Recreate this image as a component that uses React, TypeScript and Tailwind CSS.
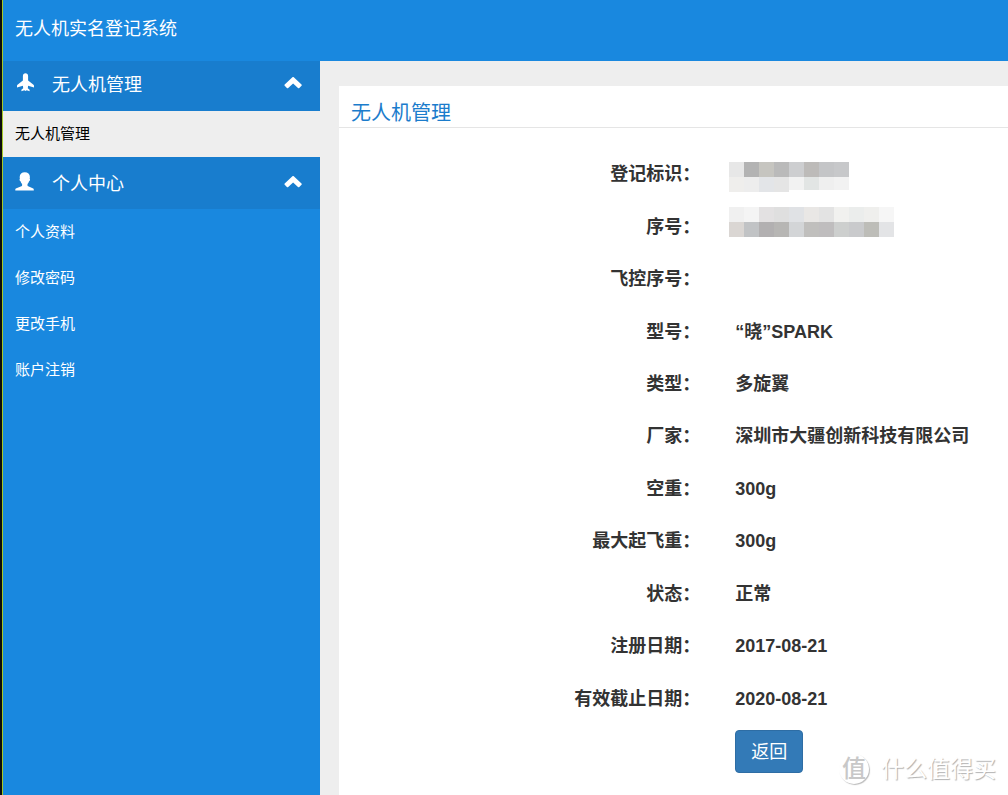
import React, { useState } from "react";

const droneLinks = ["无人机管理"];
const userLinks = ["个人资料", "修改密码", "更改手机", "账户注销"];

const fields = [
  { label: "登记标识", value: "", mask: "id" },
  { label: "序号", value: "", mask: "serial" },
  { label: "飞控序号", value: "" },
  { label: "型号", value: "“晓”SPARK" },
  { label: "类型", value: "多旋翼" },
  { label: "厂家", value: "深圳市大疆创新科技有限公司" },
  { label: "空重", value: "300g" },
  { label: "最大起飞重", value: "300g" },
  { label: "状态", value: "正常" },
  { label: "注册日期", value: "2017-08-21" },
  { label: "有效截止日期", value: "2020-08-21" },
];

const idMask = [
  ["#e7e7e7", "#b3b3b3", "#c6c5c0", "#bababa", "#cdced0", "#bdbbb9", "#c4c5c7", "#c7c8ca"],
  ["#efeeec", "#ededed", "#e3e5e8", "#e5e5e5", "#f2f2f2", "#e2e5e4", "#efefef", "#f2f2f2"],
];

const serialMask = [
  ["#f0f0f0", "#f4f4f4", "#e3e1e2", "#dfdfdf", "#e0e2e5", "#e9e7e5", "#e3e3e3", "#f1f1ef", "#ebedec", "#efefed", "#f6f6f6"],
  ["#dad6d3", "#c1c3c5", "#b2b0b1", "#b7b6b4", "#d3d5d7", "#c0bfbd", "#bfbdbe", "#cdcfce", "#c9cacc", "#bdbdb8", "#e3e4e6"],
];

const Mosaic = ({ rows, rounded }: { rows: string[][]; rounded?: boolean }) => (
  <svg
    className="block h-[30px]"
    width={rows[0].length * 15}
    height={30}
    shapeRendering="crispEdges"
    aria-hidden="true"
  >
    {rows.map((row, y) =>
      row.map((color, x) => (
        <rect
          key={`${x}-${y}`}
          x={x * 15}
          y={y * 15}
          width={15}
          height={rounded && y === 1 && x > 3 ? 13 : 15}
          fill={color}
        />
      ))
    )}
  </svg>
);

const PlaneIcon = () => (
  <svg className="size-[19px]" viewBox="0 0 19 19" fill="currentColor" aria-hidden="true">
    <path d="M10.500.200c1.500 0 2.600 1.100 2.600 2.700V7.400l5.400 4.400c.3.200.5.600.5.900v1.800l-5.900-1.700-.3 2.500 1.800 1.500v1.400l-2.900-.9-1.200.7-1.200-.7-2.900.9v-1.400l1.800-1.500-.3-2.500L2 14.500v-1.800c0-.3.200-.7.500-.9l5.400-4.400V2.900C7.900 1.300 9 .2 10.500.2z" />
  </svg>
);

const UserIcon = () => (
  <svg className="size-[19px]" viewBox="0 0 19 19" fill="currentColor" aria-hidden="true">
    <path d="M9.800.3c3 0 5.100 1.700 5.100 4.600 0 .7-.1 1.300-.2 1.800.5.200.6 1.900-.6 2.600-.5 1.300-1 2.200-1.600 2.800v1.300c0 .4.300.7.700.9l4.500 2c.8.3 1.100.8 1.100 1.500v.7H.3v-.7c0-.7.3-1.200 1.100-1.500l5-2c.4-.2.700-.5.700-.9v-1.300c-.6-.6-1.100-1.500-1.600-2.800-1.200-.7-1.100-2.400-.6-2.600-.1-.5-.2-1.100-.2-1.800C4.700 2 6.800.3 9.800.3z" />
  </svg>
);

const ChevronIcon = ({ open }: { open: boolean }) => (
  <svg
    className={`mt-1 w-[18px] h-3 ${open ? "" : "rotate-180"}`}
    viewBox="0 0 18 12"
    fill="currentColor"
    aria-hidden="true"
  >
    <path d="M8.400.300a1 1 0 0 1 1.400 0l7.700 7.200a1 1 0 0 1 0 1.300l-2.200 2.200a1 1 0 0 1-1.300 0L9.100 6.600l-4.900 4.400a1 1 0 0 1-1.300 0L.7 8.800a1 1 0 0 1 0-1.300z" />
  </svg>
);

const MenuGroup = ({
  title,
  icon,
  links,
  active,
  className,
}: {
  title: string;
  icon: React.ReactNode;
  links: string[];
  active?: string;
  className: string;
}) => {
  const [open, setOpen] = useState(true);

  return (
    <div>
      <button
        type="button"
        aria-expanded={open}
        onClick={() => setOpen(!open)}
        className={`flex w-full items-start bg-[#187dce] pl-3 pr-[18px] text-lg leading-6 text-white ${className}`}
      >
        {icon}
        <span className="ml-[18px] flex-1 text-left">{title}</span>
        <ChevronIcon open={open} />
      </button>
      {open && (
        <ul>
          {links.map((item) => (
            <li key={item}>
              <a
                href="#"
                className={`flex h-[46px] items-center px-3 text-[15px] leading-6 ${
                  item == active ? "bg-[#eeeeee] text-black" : "text-white"
                }`}
              >
                {item}
              </a>
            </li>
          ))}
        </ul>
      )}
    </div>
  );
};

const Watermark = () => (
  <div className="pointer-events-none absolute right-3 bottom-2 flex items-center gap-3 text-white">
    <span className="flex size-[30px] items-center justify-center rounded-full text-2xl font-medium text-[#c8c8c8] shadow-[1px_1px_1px_#bbbbbb]">
      值
    </span>
    <span className="text-[23px] leading-9 [text-shadow:1px_1px_1px_#b0b0b0]">
      什么值得买
    </span>
  </div>
);

const App = () => {
  return (
    <div className="flex min-h-screen bg-[#eeeeee] font-['Liberation_Sans','Noto_Sans_CJK_SC',sans-serif]">
      <div className="w-[3px] shrink-0 border-r border-[#a5c928] bg-[#0c0c0c]" />
      <div className="flex min-w-0 flex-1 flex-col">
        <header className="flex h-[61px] shrink-0 items-center bg-[#1988df] px-3 pb-1">
          <h1 className="text-lg text-white">无人机实名登记系统</h1>
        </header>

        <div className="flex flex-1">
          <nav className="w-[317px] shrink-0 bg-[#1988df]">
            <MenuGroup
              title="无人机管理"
              icon={<PlaneIcon />}
              links={droneLinks}
              active="无人机管理"
              className="h-[50px] pt-3"
            />
            <MenuGroup
              title="个人中心"
              icon={<UserIcon />}
              links={userLinks}
              className="h-[52px] pt-[15px]"
            />
          </nav>

          <main className="relative mt-[25px] ml-[19px] min-w-0 flex-1 bg-white text-[#333333]">
            <h2 className="flex h-[42px] items-end border-b border-[#e5e5e5] px-3 text-xl leading-7 text-[#1b7ccc]">
              无人机管理
            </h2>

            <dl className="mt-5 grid h-[577px] auto-rows-fr text-lg font-bold">
              {fields.map((field) => (
                <div
                  key={field.label}
                  className="grid grid-cols-[54fr_46fr] items-center"
                >
                  <dt className="text-right">{field.label}：</dt>
                  <dd className="relative pl-[35px] whitespace-nowrap">
                    {field.value}
                    {field.mask == "id" && (
                      <div className="absolute -top-3 left-[29px]">
                        <Mosaic rows={idMask} rounded />
                      </div>
                    )}
                    {field.mask == "serial" && (
                      <div className="absolute -top-5 left-[29px]">
                        <Mosaic rows={serialMask} />
                      </div>
                    )}
                  </dd>
                </div>
              ))}
            </dl>

            <div className="mt-[5px] mb-5 grid grid-cols-[54fr_46fr]">
              <div className="col-start-2 pl-[35px]">
                <button
                  type="button"
                  className="h-[43px] rounded border border-[#2e6da4] bg-[#337ab7] px-[15px] text-lg leading-6 text-white"
                >
                  返回
                </button>
              </div>
            </div>

            <Watermark />
          </main>
        </div>
      </div>
    </div>
  );
};

export default App;
